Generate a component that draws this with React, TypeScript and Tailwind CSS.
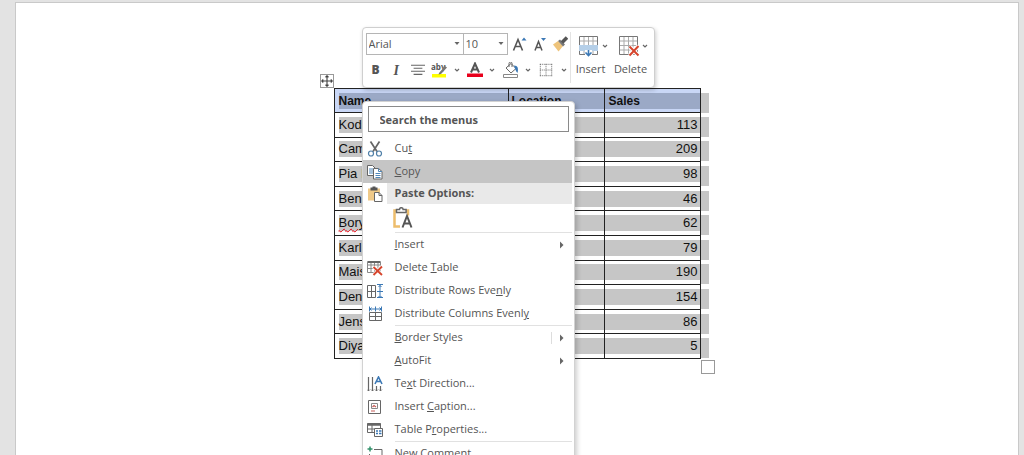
import type { ReactNode } from "react";

const rows: [string, number][] = [
  ["Kodi", 113],
  ["Cam", 209],
  ["Pia I", 98],
  ["Ben", 46],
  ["Bory", 62],
  ["Karl", 79],
  ["Mais", 190],
  ["Den", 154],
  ["Jens", 86],
  ["Diya", 5],
];

function Icon({ children, className = "size-4" }: { children: ReactNode; className?: string }) {
  return (
    <svg viewBox="0 0 16 16" fill="none" stroke="#666" strokeWidth="1" className={className} aria-hidden="true">
      {children}
    </svg>
  );
}

function Chevron() {
  return (
    <svg viewBox="0 0 6 4" className="h-1 w-1.5 shrink-0" fill="none" stroke="#666" strokeWidth="1.2" aria-hidden="true">
      <path d="M1 1l2 2 2-2" />
    </svg>
  );
}

function Caret({ className }: { className: string }) {
  return (
    <svg viewBox="0 0 6 4" className={className} fill="#666" aria-hidden="true">
      <path d="M.5 0h5L3 3z" />
    </svg>
  );
}

const CutIcon = () => (
  <Icon>
    <path d="M3.5 .5 10 10.500M12.500 .5 6 10.500" stroke="#666" strokeWidth="1.7" />
    <circle cx="4" cy="12.500" r="2.500" stroke="#4f7fa8" strokeWidth="1.2" />
    <circle cx="12" cy="12.500" r="2.500" stroke="#4f7fa8" strokeWidth="1.2" />
  </Icon>
);

const CopyIcon = () => (
  <Icon>
    <path d="M.5 1.500h5l2.500 2.500v7.500H.5z" fill="#fff" />
    <path d="M2 5h4M2 7h4M2 9h4" stroke="#4f86b8" />
    <path d="M6.500 4.500h5l3.500 3v7.500H6.500z" fill="#fff" />
    <path d="M11.500 4.500v3H15M8.500 9.500h5M8.500 11.500h5M8.500 13.500h5" stroke="#4f86b8" />
  </Icon>
);

const PasteIcon = () => (
  <Icon>
    <path d="M1 2.500h12v12H1z" fill="#efc988" stroke="none" />
    <path d="M3.500 1.500h2V.5h3v1h2v3h-7z" fill="#555" stroke="none" />
    <path d="M7.500 6.500h4.500l3 3v6H7.500z" fill="#fff" />
    <path d="M12 6.500v3h3" />
  </Icon>
);

const KeepTextIcon = () => (
  <svg viewBox="0 0 22 22" className="size-[22px]" fill="none" aria-hidden="true">
    <path d="M9 19.500H3.500v-16H6M14.500 3.500h2.500v5" stroke="#edbd6c" strokeWidth="2.5" />
    <path d="M5.500 5.500v-3h3a1.800 1.800 0 0 1 3.600 0h3v3z" fill="#fff" stroke="#666" strokeWidth="1.5" />
    <path d="m11.500 20.500 4.500-11.500 4.500 11.500M13 16.500h6" stroke="#555" strokeWidth="2" />
  </svg>
);

const DeleteTableIcon = () => (
  <Icon>
    <path d="M.5 1.500h13v11H.5zM.5 5h13M.5 8.500h13M4 1.500v11M7.500 1.500v11M11 1.500v11" stroke="#888" />
    <path d="M1 2h12" stroke="#666" strokeWidth="2" />
    <path d="m6.500 7 8.500 8M15 6.500 6.500 15" stroke="#fff" strokeWidth="3.5" />
    <path d="m6.500 7 8.500 8M15 6.500 6.500 15" stroke="#d6452d" strokeWidth="1.9" />
  </Icon>
);

const RowsIcon = () => (
  <Icon>
    <path d="M.5 2.500h8v12h-8zM.5 8.500h8M4.500 2.500v12" />
    <path d="M10 1.500h6M10 8.500h6M10 14.500h6M13 2v12M11.500 4 13 2.500 14.500 4M11.500 13l1.500 1.500 1.500-1.500" stroke="#3b78b5" />
  </Icon>
);

const ColsIcon = () => (
  <Icon>
    <path d="M2.500 6.500h12v8h-12zM8.500 6.500v8M2.500 10.500h12" />
    <path d="M2.500 .5v5M8.500 .5v5M14.500 .5v5M3 3h11M4.500 1.500 3 3l1.500 1.500M12.500 1.500 14 3l-1.500 1.500" stroke="#3b78b5" />
  </Icon>
);

const DirectionIcon = () => (
  <Icon>
    <path d="M1.500 1v14M5.500 1v14M9.500 10v5M13.500 10v5" stroke="#666" strokeWidth="1.2" />
    <path d="M0 13.500 1.500 15 3 13.500M4 13.500 5.500 15 7 13.500M8 13.500 9.500 15l1.500-1.500M12 13.500l1.500 1.500 1.500-1.500" strokeWidth=".7" />
    <path d="m8 8 3.500-7L15 8M9.500 5.500h4" stroke="#3b78b5" strokeWidth="1.6" />
  </Icon>
);

const CaptionIcon = () => (
  <Icon>
    <path d="M1.500 1.500h12v13h-12z" />
    <path d="M4.500 4.500h6v5h-6z" stroke="#888" />
    <path d="M4 12h4M5.500 8 7 6.500 9 8" stroke="#c65c58" strokeWidth="1.2" />
  </Icon>
);

const PropsIcon = () => (
  <Icon>
    <path d="M.5 1.500h13v9H.5zM.5 7h7M5 3v8" />
    <path d="M.5 2.500h13" strokeWidth="2.5" />
    <path d="M7.500 6.500h8v8h-8z" fill="#fff" />
    <path d="M9 9h2M9 11.500h2M12 9h2.500M12 11.500h2.500" stroke="#3b78b5" strokeWidth="1.3" />
  </Icon>
);

const CommentIcon = () => (
  <Icon>
    <path d="M7 3.500h8v8H8l-3 3v-3H2.500V8" />
    <path d="M3 .5v5M.5 3h5" stroke="#2f9069" strokeWidth="1.5" />
  </Icon>
);

function Item({ icon, children, arrow, split, active }: { icon?: ReactNode; children: ReactNode; arrow?: boolean; split?: boolean; active?: boolean }) {
  return (
    <button
      type="button"
      role="menuitem"
      className={`flex h-[23px] w-full items-center pr-2 text-left ${active ? "bg-[#c5c5c5]" : "hover:bg-[#e5e5e5]"}`}
    >
      <span className="flex w-8 shrink-0 pl-1">{icon}</span>
      <span className="grow whitespace-nowrap">{children}</span>
      {split && <span className="mr-2 h-3 w-px bg-[#ddd]" />}
      {arrow && (
        <svg viewBox="0 0 4 8" className="h-2 w-1" fill="#666" aria-hidden="true">
          <path d="M0 .5l3.500 3.500-3.500 3.500z" />
        </svg>
      )}
    </button>
  );
}

const Divider = () => <div role="separator" className="ml-8 h-px bg-[#e1e1e1]" />;

function ContextMenu() {
  return (
    <div
      role="menu"
      className="absolute top-[13px] left-[28px] z-10 w-[213px] rounded-sm border border-[#d2d2d2] bg-white pr-0.5 pb-1 text-[11px] text-[#555] shadow-[2px_2px_5px_rgba(0,0,0,0.2)]"
    >
      <div className="pt-1 pr-[3px] pb-[5px] pl-[5px]">
        <input
          aria-label="Search the menus"
          placeholder="Search the menus"
          className="block h-[26px] w-full border border-[#8a8a8a] bg-white px-[11px] font-bold outline-none placeholder:text-[#555] placeholder:opacity-100"
        />
      </div>
      <Item icon={<CutIcon />}>Cu<u>t</u></Item>
      <Item icon={<CopyIcon />} active><u>C</u>opy</Item>
      <div className="flex h-[21px] items-center">
        <span className="flex w-6 shrink-0 pl-1"><PasteIcon /></span>
        <span className="flex h-full grow items-center bg-[#e9e9e9] pl-2 font-bold">Paste Options:</span>
      </div>
      <div className="flex h-7 items-center pl-7">
        <button type="button" aria-label="Keep Text Only"><KeepTextIcon /></button>
      </div>
      <Divider />
      <Item arrow><u>I</u>nsert</Item>
      <Item icon={<DeleteTableIcon />}>Delete <u>T</u>able</Item>
      <Item icon={<RowsIcon />}>Distribute Rows Eve<u>n</u>ly</Item>
      <Item icon={<ColsIcon />}>Distribute Columns Evenl<u>y</u></Item>
      <Divider />
      <Item arrow split><u>B</u>order Styles</Item>
      <Item arrow><u>A</u>utoFit</Item>
      <Item icon={<DirectionIcon />}>Te<u>x</u>t Direction...</Item>
      <Item icon={<CaptionIcon />}>Insert <u>C</u>aption...</Item>
      <Item icon={<PropsIcon />}>Table P<u>r</u>operties...</Item>
      <Divider />
      <Item icon={<CommentIcon />}>New Co<u>m</u>ment</Item>
    </div>
  );
}

function GridIcon({ remove }: { remove?: boolean }) {
  return (
    <svg viewBox="0 0 22 22" className="size-[22px]" fill="none" aria-hidden="true">
      <path d="M6 1.500v18M10.500 1.500v18M15 1.500v18M1.500 6h18M1.500 10.500h18M1.500 15h18" stroke="#aaa" />
      <path d="M1.500 1.500h18v18h-18z" stroke="#777" />
      {remove ? (
        <>
          <path d="m11.500 11.500 9 9M20.500 11 11.500 20.500" stroke="#fff" strokeWidth="4" />
          <path d="m11.500 11.500 9 9M20.500 11 11.500 20.500" stroke="#d6452d" strokeWidth="2" />
        </>
      ) : (
        <>
          <path d="M1 10h19v6H1z" fill="#b5cfe8" />
          <path d="M7 15h7v6H7z" fill="#fff" />
          <path d="M10.500 15v5.500M7.500 17.500l3 3 3-3" stroke="#3b78b5" strokeWidth="1.6" />
        </>
      )}
    </svg>
  );
}

function BigTool({ label, remove }: { label: string; remove?: boolean }) {
  return (
    <button type="button" className="flex w-10 flex-col items-center gap-1">
      <span className="flex items-center gap-0.5 pl-1">
        <GridIcon remove={remove} />
        <Chevron />
      </span>
      <span className="leading-4">{label}</span>
    </button>
  );
}

function MiniToolbar() {
  return (
    <div
      role="toolbar"
      aria-label="Formatting"
      className="absolute top-[-61px] left-[28px] z-20 flex h-[61px] w-[293px] rounded border border-[#cfcfcf] bg-white text-[11px] text-[#555] shadow-[1px_2px_4px_rgba(0,0,0,0.2)]"
    >
      <div className="flex w-[207px] flex-col pt-[5px] pl-[3px]">
        <div className="flex items-center">
          <div className="relative">
            <select aria-label="Font" className="block h-[22px] w-[98px] appearance-none border border-[#b5b5b5] bg-white px-0.5 outline-none">
              <option>Arial</option>
            </select>
            <Caret className="absolute top-[9px] right-1 h-1 w-1.5" />
          </div>
          <div className="relative">
            <select aria-label="Font size" className="block h-[22px] w-11 appearance-none border border-l-0 border-[#b5b5b5] bg-white px-0.5 outline-none">
              <option>10</option>
            </select>
            <Caret className="absolute top-[9px] right-1 h-1 w-1.5" />
          </div>
          <div className="flex items-center gap-1 pl-1">
            <button type="button" aria-label="Grow font">
              <Icon>
                <path d="m1.500 14.500 4.500-11 4.500 11M3 10.500h6" stroke="#555" strokeWidth="1.6" />
                <path d="M9.500 4.500 12 1.500l2.500 3z" fill="#3b78b5" stroke="none" />
              </Icon>
            </button>
            <button type="button" aria-label="Shrink font">
              <Icon>
                <path d="m3 14.500 3.500-9 3.500 9M4.300 11.500h4.500" stroke="#555" strokeWidth="1.5" />
                <path d="M9 2h5l-2.500 3z" fill="#3b78b5" stroke="none" />
              </Icon>
            </button>
            <button type="button" aria-label="Format painter">
              <Icon>
                <path d="M1 8.500 6 5l5 5-4.500 5.500z" fill="#eec47c" stroke="none" />
                <path d="m6 5 2-1.500 5 5-2 2z" fill="#777" stroke="none" />
                <path d="m10 6.500 5-5" stroke="#555" strokeWidth="3.5" />
              </Icon>
            </button>
          </div>
        </div>
        <div className="flex h-[30px] items-center pl-1.5">
          <button type="button" className="w-5 text-left text-[12px] font-extrabold">B</button>
          <button type="button" className="w-[19px] pl-0.5 text-left font-['Liberation_Serif',serif] text-[14px] font-bold italic">I</button>
          <button type="button" aria-label="Center" className="w-5">
            <Icon className="size-[14px]">
              <path d="M0 2.500h16M3 6h10M0 9.500h16M3 13h10" strokeWidth="1.2" />
            </Icon>
          </button>
          <button type="button" aria-label="Highlight" className="flex w-9 items-center gap-1.5">
            <svg viewBox="0 0 17 16" className="h-4 w-[17px]" fill="none" aria-hidden="true">
              <text x="0" y="8" fontFamily="Open Sans, sans-serif" fontSize="8" fontWeight="700" fill="#555">aby</text>
              <path d="M1 12h14v3.500H1z" fill="#ff0" />
              <path d="m8 11 6-7 2 1.500-6 6.500-2.500.5z" fill="#777" />
            </svg>
            <Chevron />
          </button>
          <button type="button" aria-label="Font color" className="flex w-9 items-center gap-1.5">
            <svg viewBox="0 0 16 16" className="size-4" fill="none" aria-hidden="true">
              <path d="M4 10.500 8 1.500l4 9M5.500 7.500h5" stroke="#555" strokeWidth="2" />
              <path d="M0 11.500h16v3.500H0z" fill="#e8001c" />
            </svg>
            <Chevron />
          </button>
          <button type="button" aria-label="Shading" className="flex w-9 items-center gap-1.5">
            <Icon>
              <path d="m3 6 5-4.500 5 5-5 4.500zM6 5V1.500a1.500 1.500 0 0 1 3 0V5" />
              <path d="M11 3.500c4 0 4.500 3 3.500 7.500-1.500-1.500-2.500-4-3.500-7.500z" fill="#3b78b5" stroke="none" />
              <path d="M.5 12.500h14v3H.5z" stroke="#888" />
            </Icon>
            <Chevron />
          </button>
          <button type="button" aria-label="Borders" className="flex items-center gap-2">
            <Icon className="size-[14px]">
              <path d="M1 1.500h14M1 8h14M1 14.500h14M1.500 1v14M8 1v14M14.500 1v14" strokeDasharray="1.2 1" />
            </Icon>
            <Chevron />
          </button>
        </div>
      </div>
      <div className="my-1 flex border-l border-[#e3e3e3] pt-[3px]">
        <BigTool label="Insert" />
        <BigTool label="Delete" remove />
      </div>
    </div>
  );
}

function SalesTable() {
  return (
    <table className="h-[271px] border-collapse font-['Liberation_Sans',Arial,sans-serif] text-[13px] leading-4 text-[#111]">
      <thead>
        <tr className="text-left text-[12px] font-bold">
          <th className="w-[174px] border border-[#222] bg-[#c9d7f6] p-0 pl-1">
            <div className="bg-[#9ba9c6]">Name</div>
          </th>
          <th className="w-24 border border-[#222] bg-[#c9d7f6] p-0">
            <div className="bg-[#9ba9c6] pl-[3px]">Location</div>
          </th>
          <th className="w-24 border border-[#222] bg-[#c9d7f6] p-0">
            <div className="bg-[#9ba9c6] pl-1">Sales</div>
          </th>
          <td className="w-2 p-0 pt-1">
            <div className="h-5 w-2 bg-[#c6c6c6]" />
          </td>
        </tr>
      </thead>
      <tbody>
        {rows.map(([name, sales]) => (
          <tr key={name}>
            <td className="border border-[#222] p-0 pl-1">
              <div className="bg-[#c6c6c6]">
                <span className={name === "Bory" ? "underline decoration-red-600 decoration-wavy decoration-1" : ""}>{name}</span>
              </div>
            </td>
            <td className="border border-[#222] p-0">
              <div className="h-4 bg-[#c6c6c6]" />
            </td>
            <td className="border border-[#222] p-0">
              <div className="bg-[#c6c6c6] pr-0.5 text-right">{sales}</div>
            </td>
            <td className="p-0 pt-1">
              <div className="h-5 w-2 bg-[#c6c6c6]" />
            </td>
          </tr>
        ))}
      </tbody>
    </table>
  );
}

export default function App() {
  return (
    <div className="h-screen overflow-hidden bg-[#e3e3e3] pt-0.5 pr-[5px] pl-[15px] font-['Open_Sans','Noto_Sans',sans-serif]">
      <main className="flex h-full justify-center border border-b-0 border-[#c9c9c9] bg-white pt-[85px] pl-2">
        <div className="relative h-fit">
          <button type="button" aria-label="Move table" className="absolute top-[-14px] left-[-14px] border border-[#999] bg-white">
            <Icon className="size-3">
              <path d="M8 1v14M1 8h14M6 3l2-2 2 2M6 13l2 2 2-2M3 6 1 8l2 2M13 6l2 2-2 2" stroke="#444" strokeWidth="1.5" />
            </Icon>
          </button>
          <SalesTable />
          <div className="absolute right-[-6px] bottom-[-15px] size-[14px] border border-[#999] bg-white" />
          <MiniToolbar />
          <ContextMenu />
        </div>
      </main>
    </div>
  );
}
